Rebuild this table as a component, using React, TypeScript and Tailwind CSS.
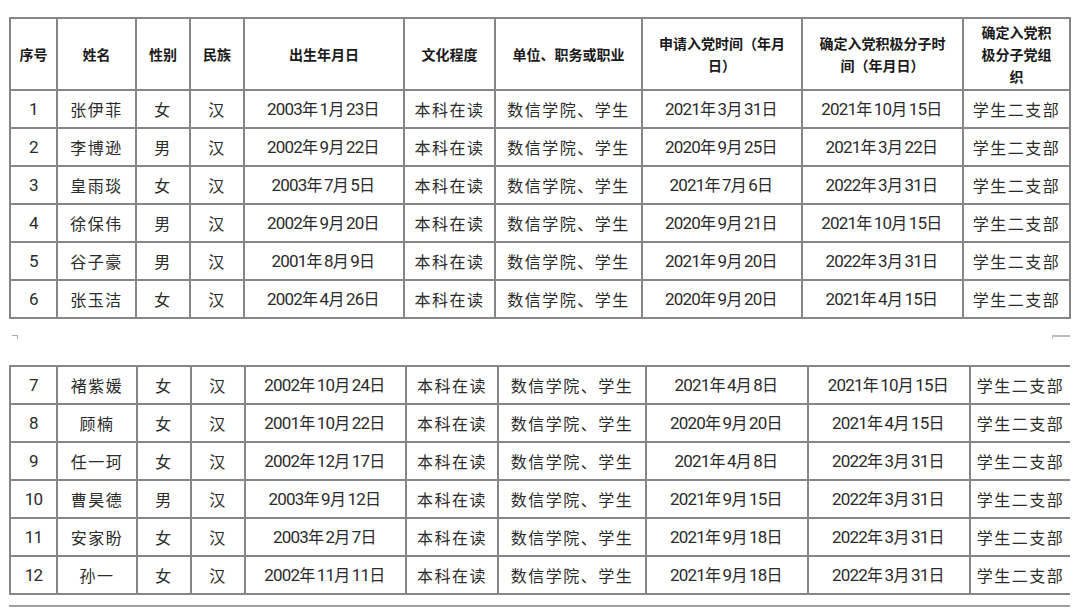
import React from "react";

type Row = [string, string, string, string, string, string, string, string, string, string];

const rows1: Row[] = [
  ["1", "张伊菲", "女", "汉", "2003年1月23日", "本科在读", "数信学院、学生", "2021年3月31日", "2021年10月15日", "学生二支部"],
  ["2", "李博逊", "男", "汉", "2002年9月22日", "本科在读", "数信学院、学生", "2020年9月25日", "2021年3月22日", "学生二支部"],
  ["3", "皇雨琰", "女", "汉", "2003年7月5日", "本科在读", "数信学院、学生", "2021年7月6日", "2022年3月31日", "学生二支部"],
  ["4", "徐保伟", "男", "汉", "2002年9月20日", "本科在读", "数信学院、学生", "2020年9月21日", "2021年10月15日", "学生二支部"],
  ["5", "谷子豪", "男", "汉", "2001年8月9日", "本科在读", "数信学院、学生", "2021年9月20日", "2022年3月31日", "学生二支部"],
  ["6", "张玉洁", "女", "汉", "2002年4月26日", "本科在读", "数信学院、学生", "2020年9月20日", "2021年4月15日", "学生二支部"],
];

const rows2: Row[] = [
  ["7", "褚紫媛", "女", "汉", "2002年10月24日", "本科在读", "数信学院、学生", "2021年4月8日", "2021年10月15日", "学生二支部"],
  ["8", "顾楠", "女", "汉", "2001年10月22日", "本科在读", "数信学院、学生", "2020年9月20日", "2021年4月15日", "学生二支部"],
  ["9", "任一珂", "女", "汉", "2002年12月17日", "本科在读", "数信学院、学生", "2021年4月8日", "2022年3月31日", "学生二支部"],
  ["10", "曹昊德", "男", "汉", "2003年9月12日", "本科在读", "数信学院、学生", "2021年9月15日", "2022年3月31日", "学生二支部"],
  ["11", "安家盼", "女", "汉", "2003年2月7日", "本科在读", "数信学院、学生", "2021年9月18日", "2022年3月31日", "学生二支部"],
  ["12", "孙一", "女", "汉", "2002年11月11日", "本科在读", "数信学院、学生", "2021年9月18日", "2022年3月31日", "学生二支部"],
];

const widths1 = [47, 79, 54, 54, 160, 91, 147, 160, 161, 107];
const widths2 = [47, 80, 54, 54, 161, 92, 148, 162, 162, 100];

const cjk = '"Noto Sans CJK SC", "Noto Sans", sans-serif';
const digitFont = 'Roboto, "Noto Sans CJK SC", sans-serif';

function Txt({ s }: { s: string }) {
  const parts = s.split(/(\d+)/).filter((p) => p.length > 0);
  return (
    <>
      {parts.map((p, i) =>
        /^\d+$/.test(p) ? (
          <span key={i} className="text-[17px] tracking-[-0.8px]" style={{ fontFamily: digitFont }}>
            {p}
          </span>
        ) : (
          <span key={i} className="text-[16px] tracking-[1.5px]" style={{ fontFamily: cjk }}>
            {p}
          </span>
        )
      )}
    </>
  );
}

function Body({ rows, openRight }: { rows: Row[]; openRight?: boolean }) {
  return (
    <tbody>
      {rows.map((r) => (
        <tr key={r[0]} className="h-[38px]">
          {r.map((c, i) => (
            <td
              key={i}
              className={
                openRight && i === 9
                  ? "border-2 border-r-0 border-[#868686] p-0 text-center align-middle leading-none whitespace-nowrap text-[#2b2b2b]"
                  : "border-2 border-[#868686] p-0 text-center align-middle leading-none whitespace-nowrap text-[#2b2b2b]"
              }
            >
              <Txt s={c} />
            </td>
          ))}
        </tr>
      ))}
    </tbody>
  );
}

function Cols({ widths }: { widths: number[] }) {
  return (
    <colgroup>
      {widths.map((w, i) => (
        <col key={i} style={{ width: w }} />
      ))}
    </colgroup>
  );
}

const headers: React.ReactNode[] = [
  "序号",
  "姓名",
  "性别",
  "民族",
  "出生年月日",
  "文化程度",
  "单位、职务或职业",
  <>
    申请入党时间（年月
    <br />
    日）
  </>,
  <>
    确定入党积极分子时
    <br />
    间（年月日）
  </>,
  <>
    确定入党积
    <br />
    极分子党组
    <br />
    织
  </>,
];

export default function App() {
  return (
    <div className="w-[1080px] h-[612px] overflow-hidden bg-white" style={{ fontFamily: cjk }}>
      <div className="pt-[17px] pl-[9px]">
        <table className="table-fixed border-collapse w-[1061px]">
          <Cols widths={widths1} />
          <thead>
            <tr className="h-[72px]">
              {headers.map((h, i) => (
                <th
                  key={i}
                  className="border-2 border-[#868686] p-0 text-center align-middle text-[14px] leading-[22px] font-bold whitespace-nowrap text-[#1a1a1a]"
                >
                  {h}
                </th>
              ))}
            </tr>
          </thead>
          <Body rows={rows1} />
        </table>

        <div className="flex justify-between h-[46px] pt-[16px] pr-[10px]">
          <div className="w-[6px] h-[4px] border-t border-r border-[#aaa] ml-[3px]" />
          <div className="w-[18px] h-[4px] border-t-2 border-l border-[#bbb]" />
        </div>

        <table className="table-fixed border-collapse w-[1060px]">
          <Cols widths={widths2} />
          <Body rows={rows2} openRight />
        </table>

        <div className="mt-[10px] w-[1061px] h-0 border-t-2 border-[#a0a0a0]" />
      </div>
    </div>
  );
}
